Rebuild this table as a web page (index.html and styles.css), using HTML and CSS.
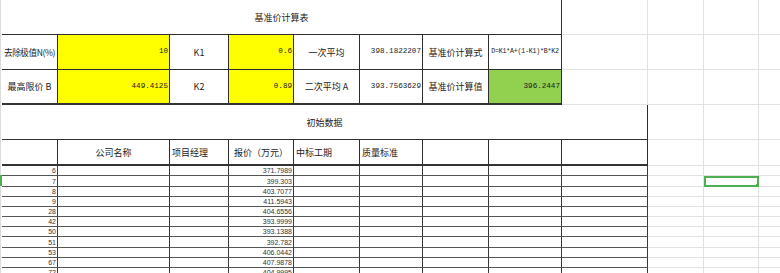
FILE: index.html
```html
<!DOCTYPE html>
<html lang="zh">
<head>
<meta charset="utf-8">
<title>基准价计算表</title>
<link rel="stylesheet" href="styles.css">
</head>
<body>
<div class="sheet">
  <!-- row 1 -->
  <div class="c title span8 bd r1">基准价计算表</div>
  <div class="c lt"></div><div class="c lt"></div><div class="c lt"></div><div class="c lt end"></div>

  <!-- row 2 -->
  <div class="c bd r2 lbl tight">去除极值N(%)</div>
  <div class="c bd r2 yel num">10</div>
  <div class="c bd r2 lbl">K1</div>
  <div class="c bd r2 yel num">0.6</div>
  <div class="c bd r2 lbl">一次平均</div>
  <div class="c bd r2 num">398.1822207</div>
  <div class="c bd r2 lbl">基准价计算式</div>
  <div class="c bd r2 formula">D=K1*A+(1-K1)*B*K2</div>
  <div class="c lt"></div><div class="c lt"></div><div class="c lt"></div><div class="c lt end"></div>

  <!-- row 3 -->
  <div class="c bd r3 lbl">最高限价 B</div>
  <div class="c bd r3 yel num">449.4125</div>
  <div class="c bd r3 lbl">K2</div>
  <div class="c bd r3 yel num">0.89</div>
  <div class="c bd r3 lbl">二次平均 A</div>
  <div class="c bd r3 num">393.7563629</div>
  <div class="c bd r3 lbl">基准价计算值</div>
  <div class="c bd r3 grn num">396.2447</div>
  <div class="c lt"></div><div class="c lt"></div><div class="c lt"></div><div class="c lt end"></div>

  <!-- row 4 -->
  <div class="c sub span9 bd r4">初始数据</div>
  <div class="c lt"></div><div class="c lt"></div><div class="c lt end"></div>

  <!-- row 5 header -->
  <div class="c bd hd"></div>
  <div class="c bd hd center">公司名称</div>
  <div class="c bd hd">项目经理</div>
  <div class="c bd hd center">报价（万元）</div>
  <div class="c bd hd">中标工期</div>
  <div class="c bd hd">质量标准</div>
  <div class="c bd hd"></div>
  <div class="c bd hd"></div>
  <div class="c bd hd"></div>
  <div class="c lt"></div><div class="c lt"></div><div class="c lt end"></div>
</div>
<div class="sheet data" id="data"></div>
<script src="app.js"></script>
</body>
</html>
```

FILE: app.js
```js
const rows = [
  ["6", "371.7989"], ["7", "399.303"], ["8", "403.7077"], ["9", "411.5943"],
  ["28", "404.6556"], ["42", "393.9999"], ["50", "393.1388"], ["51", "392.782"],
  ["53", "406.0442"], ["67", "407.9878"], ["72", "404.9995"]
];
const data = document.getElementById("data");
rows.forEach((r, i) => {
  const cells = [];
  cells.push(`<div class="c dr idx">${r[0]}</div>`);
  cells.push(`<div class="c dr"></div>`);
  cells.push(`<div class="c dr"></div>`);
  cells.push(`<div class="c dr price">${r[1]}</div>`);
  for (let k = 0; k < 5; k++) cells.push(`<div class="c dr"></div>`);
  cells.push(`<div class="c lt"></div>`);
  cells.push(`<div class="c lt${i === 1 ? " sel" : ""}"></div>`);
  cells.push(`<div class="c lt end"></div>`);
  data.insertAdjacentHTML("beforeend", cells.join(""));
});
```

FILE: styles.css
```css
html, body {
  margin: 0;
  padding: 0;
  background: #ffffff;
  overflow: hidden;
}
body {
  width: 780px;
  height: 273px;
  position: relative;
  font-family: "Noto Sans CJK SC", sans-serif;
  color: #1a1a1a;
}
body::before {
  content: "";
  position: absolute;
  left: 0;
  top: 0;
  bottom: 0;
  width: 1px;
  background: #dcdcdc;
}
body::after {
  content: "";
  position: absolute;
  left: 0;
  top: 175px;
  width: 2px;
  height: 11px;
  background: #4caf50;
}
.sheet {
  display: grid;
  margin-left: 2px;
  grid-template-columns: 56px 112px 59px 65px 66px 63px 66px 73px 86px 56px 55px 21px;
  grid-template-rows: 35px 35px 35px 35px 26px;
}
.sheet.data {
  grid-template-rows: 10px 11px 10px 10px 10px 10px 10px 11px 10px 10px 10px;
}
.c {
  box-sizing: border-box;
  display: flex;
  align-items: center;
  min-width: 0;
  white-space: nowrap;
  overflow: hidden;
  font-size: 9px;
  line-height: 1;
}
.bd {
  border-right: 1px solid #2e2e2e;
  border-bottom: 1px solid #2e2e2e;
}
.lt {
  border-right: 1px solid #e2e2e2;
  border-bottom: 1px solid #e2e2e2;
}
.lt.end { border-right: none; }
.span8 { grid-column: span 8; }
.span9 { grid-column: span 9; }
.title {
  justify-content: center;
  font-size: 9px;
}
.r1 { border-bottom: 1px solid #2e2e2e; }
.r3 { border-bottom: 2px solid #333333; }
.r4 { border-bottom: 1px solid #333333; }
.lbl {
  justify-content: center;
  font-size: 9px;
}
.lbl.tight {
  letter-spacing: -0.4px;
  font-size: 8.6px;
}
.num {
  justify-content: flex-end;
  padding-right: 1px;
  font-family: "Liberation Mono", monospace;
  font-size: 7.6px;
  color: #1a1a1a;
}
.yel { background: #ffff00; }
.grn { background: #92d050; padding-right: 1px; }
.formula {
  justify-content: center;
  font-family: "Liberation Mono", monospace;
  font-size: 6.6px;
  letter-spacing: -0.2px;
}
.sub {
  justify-content: center;
  font-size: 9px;
  border-right: 1px solid #2e2e2e;
}
.hd {
  border-bottom: 2px solid #333333;
  padding-left: 2px;
  font-size: 9px;
  color: #222;
}
.hd.center { justify-content: center; padding-left: 0; }
.dr {
  border-right: 1px solid #3a3a3a;
  border-bottom: 1px solid #555555;
  font-family: "Liberation Sans", sans-serif;
  font-size: 7px;
  color: #333;
}
.idx, .price {
  justify-content: flex-end;
  padding-right: 1px;
}
.sel {
  position: relative;
  border: 2px solid #4caf50;
}
.sel::after {
  content: "";
  position: absolute;
  right: -3px;
  bottom: -3px;
  width: 3px;
  height: 3px;
  background: #4caf50;
  border: 1px solid #fff;
}
```
